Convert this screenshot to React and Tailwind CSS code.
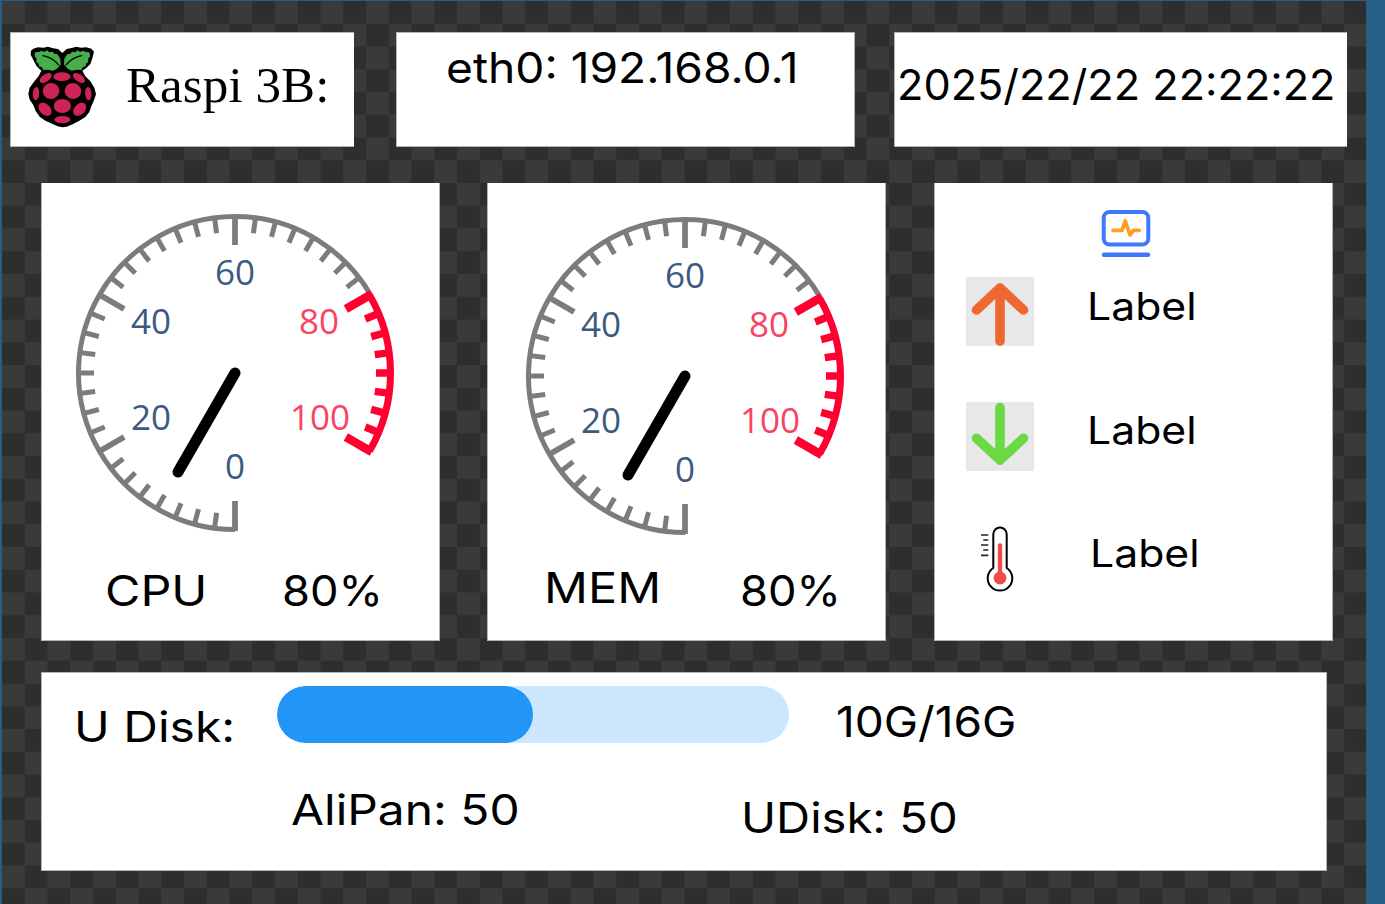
import React from "react";

const CENTER = 160;

function point(radius, degrees) {
  const a = (degrees * Math.PI) / 180;
  return [CENTER - radius * Math.sin(a), CENTER + radius * Math.cos(a)];
}

function Gauge({ className }) {
  const ticks = Array.from({ length: 41 }, (_, i) => {
    const major = i % 8 === 0;
    const hot = i >= 32;
    const [x1, y1] = point(158, i * 7.5);
    const [x2, y2] = point(major ? 128 : 141, i * 7.5);
    const width = hot ? (major ? 8.5 : 7.5) : major ? 5.8 : 5;
    return (
      <line key={i} x1={x1} y1={y1} x2={x2} y2={y2} stroke={hot ? "#ff0030" : "#7c7c7c"} strokeWidth={width} />
    );
  });
  const labels = [
    ["0", 160, 265.5],
    ["20", 76, 217],
    ["40", 76, 120.5],
    ["60", 160, 72],
    ["80", 244, 120.5],
    ["100", 245, 217],
  ];
  const [sx, sy] = point(156.5, 0);
  const [hx, hy] = point(156.5, 240);
  const [rx, ry] = point(155.5, 240);
  const [ex, ey] = point(155.5, 300);
  return (
    <svg className={className} width="320" height="320" viewBox="0 0 320 320" fill="none">
      <path d={`M${sx} ${sy}A156.5 156.5 0 1 1 ${hx} ${hy}`} stroke="#7c7c7c" strokeWidth="5" />
      {ticks}
      <path d={`M${rx} ${ry}A155.5 155.5 0 0 1 ${ex} ${ey}`} stroke="#ff0030" strokeWidth="7" />
      {labels.map(([text, x, y], i) => (
        <text
          key={text}
          x={x}
          y={y}
          textAnchor="middle"
          fontFamily="'Open Sans', 'Noto Sans', sans-serif"
          fontSize="35"
          fontWeight="400"
          fill={i > 3 ? "#f94362" : "#3a5a80"}
        >
          {text}
        </text>
      ))}
      <path d="M160 160L103 259" stroke="#000" strokeWidth="11" strokeLinecap="round" />
    </svg>
  );
}

function Raspberry() {
  return (
    <svg className="ml-[9px] mt-[7px] shrink-0" width="90" height="95" viewBox="0 0 270 285">
      <path
        d="M40 26L54 22L70 23L84 20L99 25L114 27L127 39L140 27L155 24L169 20L183 23L199 22L214 26L222 35L217 55L211 72L198 85L187 92L196 109L211 124L223 143L228 162L222 181L214 199L208 216L196 231L178 242L158 253L140 260L127 262L113 259L96 251L76 242L59 230L47 213L40 195L29 179L25 162L29 143L42 125L56 108L64 92L50 79L40 60L32 44L33 32Z"
        fill="#000"
      />
      <path d="M45 37L57 36L65 32L72 36L82 31L88 37L98 35L103 41L112 43L121 56L122 73L111 86L99 92L83 89L70 90L66 82L57 79L56 71L49 66L50 56L44 49Z" fill="#46af4b" />
      <path d="M208 37L197 36L189 32L181 36L172 31L166 37L156 35L151 41L142 43L133 56L132 73L143 86L155 92L171 89L184 90L188 82L197 79L198 71L205 66L204 56L211 49Z" fill="#46af4b" />
      <path d="M69 47Q98 53 115 74M185 47Q156 53 139 74" fill="none" stroke="#000" strokeWidth="4" strokeLinecap="round" />
      <g fill="#cd2355">
        <ellipse cx="126" cy="110" rx="26" ry="13" />
        <ellipse cx="77" cy="114" rx="21" ry="11" transform="rotate(-36 77 114)" />
        <ellipse cx="177" cy="114" rx="21" ry="11" transform="rotate(36 177 114)" />
        <ellipse cx="93" cy="153" rx="25" ry="24" transform="rotate(-25 93 153)" />
        <ellipse cx="159" cy="153" rx="25" ry="24" transform="rotate(25 159 153)" />
        <ellipse cx="48" cy="161" rx="9.500" ry="20" transform="rotate(4 48 161)" />
        <ellipse cx="205" cy="161" rx="9.500" ry="20" transform="rotate(-4 205 161)" />
        <ellipse cx="127" cy="198" rx="26" ry="21" />
        <ellipse cx="75" cy="208" rx="23" ry="16" transform="rotate(46 75 208)" />
        <ellipse cx="179" cy="208" rx="23" ry="16" transform="rotate(-46 179 208)" />
        <ellipse cx="127" cy="239" rx="24" ry="11" />
      </g>
    </svg>
  );
}

function MonitorIcon() {
  return (
    <svg className="ml-[165px] shrink-0" width="52" height="50" viewBox="0 0 52 50" fill="none" strokeLinecap="round" strokeLinejoin="round">
      <rect x="3.700" y="3" width="44.600" height="32.500" rx="6" stroke="#3f78fd" strokeWidth="4" />
      <path d="M4 45.700H48" stroke="#3f78fd" strokeWidth="4.500" />
      <path d="M13 21.300H22L25.200 11.800L30 26L33.500 21.300H39.300" stroke="#ff9d26" strokeWidth="3.800" />
    </svg>
  );
}

function ArrowIcon({ up }) {
  return (
    <svg className="shrink-0 bg-[#e8e8e8]" width="68" height="69" viewBox="0 0 68 69" fill="none" strokeWidth="9.600" strokeLinecap="round" strokeLinejoin="round">
      {up ? (
        <path d="M34 64V11M10.500 33L34 11L57.500 33" stroke="#ef6832" />
      ) : (
        <path d="M34 5.500V58M10.500 36.300L34 58L57.500 36.300" stroke="#6bd944" />
      )}
    </svg>
  );
}

function Thermometer() {
  return (
    <svg className="shrink-0" width="68" height="70" viewBox="0 0 68 70" fill="none">
      <path d="M27.300 45V11.300A6.700 6.700 0 0 1 40.700 11.300V45A12.300 12.300 0 1 1 27.300 45Z" stroke="#000" strokeWidth="2" />
      <path d="M34 22.500V56" stroke="#f04a4a" strokeWidth="4.400" strokeLinecap="round" />
      <circle cx="34" cy="55" r="6.400" fill="#f04a4a" />
      <path d="M15 12H22.300M17.300 17H22.300M15 22H22.300M17.300 27H22.300M15 32.300H22.300" stroke="#222" strokeWidth="1.700" />
    </svg>
  );
}

export default function App() {
  return (
    <main className="h-[904px] w-[1385px] overflow-hidden bg-[#265f85] pl-[2px] pt-px font-['Inter',sans-serif] text-[42.5px] font-normal leading-none text-black">
      <div className="h-[903px] w-[1364px] bg-[conic-gradient(#2e2e2e_25%,#3a3a3a_0_50%,#2e2e2e_0_75%,#3a3a3a_0)] bg-[length:45.5px_45.5px] pl-2 pt-[31px] whitespace-nowrap">
        <header className="flex h-[115px]">
          <section className="flex w-[344px] border-y border-l border-[#b4b4b4] bg-white">
            <Raspberry />
            <h1 className="ml-[16px] mt-[27px] font-['Liberation_Serif',serif] text-[51px] font-normal tracking-[0.1px]">Raspi 3B:</h1>
          </section>
          <section className="ml-[42px] w-[459px] border border-[#b4b4b4] bg-white pl-[49px] pt-[14px]">
            <p className="origin-left scale-x-[1.086]">eth0: 192.168.0.1</p>
          </section>
          <section className="ml-[39px] w-[453px] border-y border-l border-[#b4b4b4] bg-white pl-[2px] pt-[31px]">
            <p className="origin-left scale-x-[1.018]">2025/22/22 22:22:22</p>
          </section>
        </header>

        <div className="ml-[31px] mt-[36px] flex h-[458px]">
          <section className="w-[399px] border-x border-b border-[#b4b4b4] bg-white">
            <Gauge className="ml-[33px] mt-[30px]" />
            <div className="mt-[37px] flex pl-[63px]">
              <p className="w-[177px] origin-left scale-x-[1.14]">CPU</p>
              <p className="origin-left scale-x-[1.065]">80%</p>
            </div>
          </section>
          <section className="ml-[47px] w-[399px] border-x border-b border-[#b4b4b4] bg-white">
            <Gauge className="ml-[37px] mt-[33px]" />
            <div className="flex pl-[56px] pt-[31px]">
              <p className="w-[196px] origin-left scale-x-[1.145]">MEM</p>
              <p className="mt-[3px] origin-left scale-x-[1.065]">80%</p>
            </div>
          </section>
          <section className="ml-[48px] w-[399px] border-x border-b border-[#b4b4b4] bg-white pt-[26px] text-[37.5px]">
            <MonitorIcon />
            <div className="mt-[17.5px] flex pl-[31px]">
              <ArrowIcon up />
              <p className="ml-[53px] mt-[11px] origin-left scale-x-[1.14]">Label</p>
            </div>
            <div className="mt-[56px] flex pl-[31px]">
              <ArrowIcon />
              <p className="ml-[53px] mt-[10px] origin-left scale-x-[1.14]">Label</p>
            </div>
            <div className="mt-[52px] flex pl-[31px]">
              <Thermometer />
              <p className="ml-[56px] mt-[12px] origin-left scale-x-[1.14]">Label</p>
            </div>
          </section>
        </div>

        <section className="ml-[31px] mt-[31px] h-[199px] w-[1286px] border border-[#b4b4b4] bg-white">
          <div className="flex h-[100px] pt-[13px]">
            <p className="ml-[32px] mt-[20px] w-[203px] origin-left scale-x-[1.13]">U Disk:</p>
            <div className="h-[57px] w-[512px] overflow-hidden rounded-full bg-[#cce6fe]">
              <div className="h-full w-1/2 rounded-full bg-[#2196f7]" />
            </div>
            <p className="ml-[47px] mt-[15px] origin-left scale-x-[1.083]">10G/16G</p>
          </div>
          <div className="flex pl-[249px] pt-[16px]">
            <p className="w-[450px] origin-left scale-x-[1.127]">AliPan: 50</p>
            <p className="mt-[8px] origin-left scale-x-[1.11]">UDisk: 50</p>
          </div>
        </section>
      </div>
    </main>
  );
}
